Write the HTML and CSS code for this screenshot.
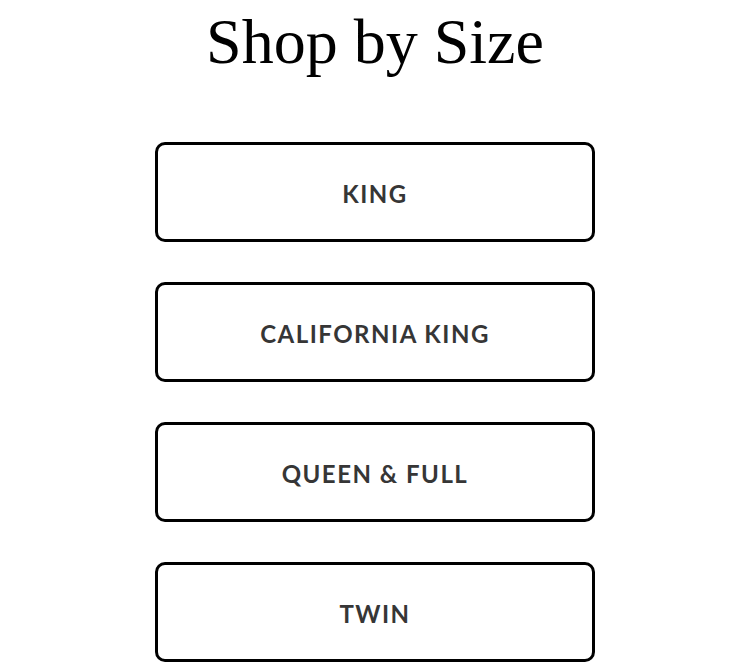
FILE: index.html
```html
<!DOCTYPE html>
<html lang="en">
    <head>
        <meta charset="UTF-8">
        <title>Shop by Size</title>
        <link rel="stylesheet" href="styles.css">
    </head>
    <body>
        <div class="shop-size">
            <h1 class="shop-size-title">Shop by Size</h1>
            <div class="size-list">
                <a class="size-button" href="#">KING</a>
                <a class="size-button" href="#">CALIFORNIA KING</a>
                <a class="size-button" href="#">QUEEN &amp; FULL</a>
                <a class="size-button" href="#">TWIN</a>
            </div>
        </div>
    </body>
</html>
```

FILE: styles.css
```css
body {
    margin: 0;
    background-color: #fff;
}
.shop-size {
    display: flex;
    flex-direction: column;
    align-items: center;
}
.shop-size-title {
    margin: 4px 0 61px 0;
    font-family: "Liberation Serif", serif;
    font-weight: normal;
    font-size: 64px;
    line-height: 1.2;
    color: #000;
}
.size-list {
    display: flex;
    flex-direction: column;
    gap: 40px;
    width: 440px;
}
.size-button {
    display: flex;
    align-items: center;
    justify-content: center;
    height: 100px;
    box-sizing: border-box;
    padding-top: 4px;
    border: 3px solid #000;
    border-radius: 10px;
    font-family: "Lato", sans-serif;
    font-weight: bold;
    font-size: 24px;
    letter-spacing: 1.5px;
    color: #363636;
    text-decoration: none;
}
```
